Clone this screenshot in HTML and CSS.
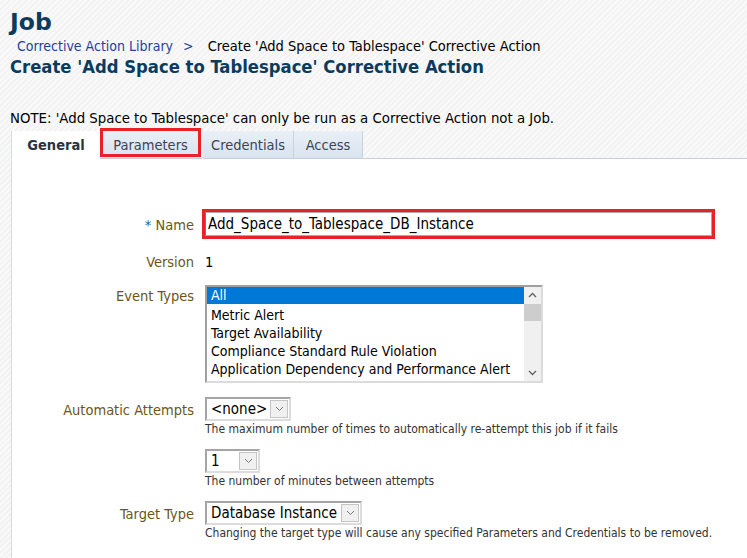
FILE: index.html
```html
<!DOCTYPE html>
<html>
<head>
<meta charset="utf-8">
<link rel="stylesheet" href="styles.css">
</head>
<body>
<div class="page">
  <header class="header">
    <h1 class="title">Job</h1>
    <div class="crumbs"><a class="crumb-link">Corrective Action Library</a><span class="crumb-sep">&gt;</span><span class="crumb-cur">Create 'Add Space to Tablespace' Corrective Action</span></div>
    <h2 class="subtitle">Create 'Add Space to Tablespace' Corrective Action</h2>
    <p class="note">NOTE: 'Add Space to Tablespace' can only be run as a Corrective Action not a Job.</p>
  </header>
  <nav class="tabs">
    <div class="tab tab-active">General</div>
    <div class="tab tab-params">Parameters<span class="hl-mark"></span></div>
    <div class="tab tab-cred">Credentials</div>
    <div class="tab tab-access">Access</div>
    <div class="tab-fill"></div>
  </nav>
  <section class="panel">
    <div class="form">
      <div class="row row-name">
        <div class="label"><span class="req">*</span> Name</div>
        <div class="field">
          <div class="hl-box"><div class="text-input">Add_Space_to_Tablespace_DB_Instance</div></div>
        </div>
      </div>
      <div class="row row-version">
        <div class="label">Version</div>
        <div class="field value">1</div>
      </div>
      <div class="row row-events">
        <div class="label">Event Types</div>
        <div class="field">
          <div class="listbox">
            <div class="options">
              <div class="opt opt-sel">All</div>
              <div class="opt">Metric Alert</div>
              <div class="opt">Target Availability</div>
              <div class="opt">Compliance Standard Rule Violation</div>
              <div class="opt">Application Dependency and Performance Alert</div>
            </div>
            <div class="scrollbar">
              <svg class="sb-arrow" width="17" height="17" viewBox="0 0 17 17"><path d="M5 10 L8.5 6.5 L12 10" fill="none" stroke="#606060" stroke-width="1.3"/></svg>
              <div class="sb-thumb"></div>
              <div class="sb-space"></div>
              <svg class="sb-arrow" width="17" height="17" viewBox="0 0 17 17"><path d="M5 7 L8.5 10.5 L12 7" fill="none" stroke="#606060" stroke-width="1.3"/></svg>
            </div>
          </div>
        </div>
      </div>
      <div class="row row-attempts">
        <div class="label">Automatic Attempts</div>
        <div class="field">
          <div class="select sel-none"><span class="sel-text">&lt;none&gt;</span><span class="sel-btn"><svg width="9" height="6" viewBox="0 0 9 6"><path d="M1 1 L4.5 4.5 L8 1" fill="none" stroke="#777" stroke-width="1"/></svg></span></div>
          <div class="help">The maximum number of times to automatically re-attempt this job if it fails</div>
          <div class="select sel-one"><span class="sel-text">1</span><span class="sel-btn"><svg width="9" height="6" viewBox="0 0 9 6"><path d="M1 1 L4.5 4.5 L8 1" fill="none" stroke="#777" stroke-width="1"/></svg></span></div>
          <div class="help">The number of minutes between attempts</div>
        </div>
      </div>
      <div class="row row-target">
        <div class="label">Target Type</div>
        <div class="field">
          <div class="select sel-target"><span class="sel-text">Database Instance</span><span class="sel-btn"><svg width="9" height="6" viewBox="0 0 9 6"><path d="M1 1 L4.5 4.5 L8 1" fill="none" stroke="#777" stroke-width="1"/></svg></span></div>
          <div class="help help-target">Changing the target type will cause any specified Parameters and Credentials to be removed.</div>
        </div>
      </div>
    </div>
  </section>
</div>
</body>
</html>
```

FILE: styles.css
```css
html, body {
  margin: 0;
  padding: 0;
}
body {
  width: 747px;
  height: 558px;
  overflow: hidden;
  font-family: "DejaVu Sans Condensed", "DejaVu Sans", sans-serif;
  font-size: 14px;
  color: #000;
  background-color: #f6f6f6;
  background-image: repeating-linear-gradient(135deg, #f9f9f9 0px, #f9f9f9 2px, #f3f3f3 2px, #f3f3f3 4px);
}
.page {
  display: flex;
  flex-direction: column;
  height: 558px;
}
.header {
  padding: 8px 0 0 10px;
}
.title {
  margin: 0;
  font-family: "DejaVu Sans", sans-serif;
  font-size: 23.5px;
  font-weight: bold;
  color: #0c3b5d;
  line-height: 28px;
}
.crumbs {
  margin: 1px 0 0 7px;
  line-height: 18px;
  font-size: 14px;
}
.crumb-link {
  color: #1f3f9f;
}
.crumb-sep {
  color: #1f3f9f;
  margin: 0 14px 0 10px;
}
.crumb-cur {
  font-size: 14.5px;
}
.subtitle {
  margin: 0;
  font-family: "DejaVu Sans Condensed", "DejaVu Sans", sans-serif;
  font-size: 18.3px;
  font-weight: bold;
  color: #0c3b5d;
  line-height: 22px;
  padding-top: 1px;
}
.note {
  margin: 31px 0 0 0;
  line-height: 18px;
  font-size: 14.8px;
}
.tabs {
  display: flex;
  align-items: stretch;
  height: 28px;
  margin-top: 4px;
  padding-left: 11px;
}
.tab {
  position: relative;
  display: flex;
  align-items: center;
  justify-content: center;
  box-sizing: border-box;
  font-size: 14.5px;
  color: #3c4452;
  background: linear-gradient(#e9eff6, #d9e4ef);
  border-right: 1px solid #c7d2de;
  border-bottom: 1px solid #c5d0dc;
}
.tab-active {
  width: 89px;
  background: #fff;
  font-weight: bold;
  color: #2b3340;
  border-left: 1px solid #d6dbe1;
  border-bottom: 1px solid #fff;
  border-right: none;
}
.tab-params {
  width: 103px;
  border-right: 2px solid #f4f4f4;
}
.tab-cred {
  width: 91px;
}
.tab-access {
  width: 69px;
}
.hl-mark {
  position: absolute;
  left: 0;
  top: -3px;
  width: 101px;
  height: 29px;
  box-sizing: border-box;
  border: 3px solid #e8212b;
}
.tab-fill {
  flex: 1;
  border-bottom: 1px solid #c5d0dc;
}
.panel {
  flex: 1;
  margin-left: 11px;
  background: #fff;
  border-left: 1px solid #d6dbe1;
}
.form {
  padding-top: 50px;
}
.row {
  display: grid;
  grid-template-columns: 182px 1fr;
  column-gap: 11px;
}
.label {
  text-align: right;
  color: #6b5618;
  line-height: 20px;
  font-size: 14.5px;
}
.req {
  color: #2a5fa0;
}
.row-name .label {
  padding-top: 6px;
}
.hl-box {
  width: 507px;
  height: 24px;
  border: 3px solid #e8212b;
  margin-left: -3px;
}
.text-input {
  height: 22px;
  border: 1px solid #a9a9a9;
  border-left-color: #777;
  padding-left: 2px;
  line-height: 22px;
  font-size: 15px;
  box-sizing: content-box;
}
.row-version {
  margin-top: 13px;
}
.value {
  line-height: 20px;
  font-size: 14.5px;
}
.row-events {
  margin-top: 13px;
}
.row-events .label {
  line-height: 18px;
  padding-top: 2px;
}
.listbox {
  display: flex;
  width: 334px;
  height: 94px;
  border: 2px solid #a0a0a0;
  border-right-color: #dcdcdc;
  border-bottom-color: #dcdcdc;
  background: #fff;
}
.options {
  flex: 1;
  overflow: hidden;
}
.opt {
  height: 18px;
  line-height: 18px;
  padding-left: 4px;
  white-space: nowrap;
}
.opt-sel {
  background: #0078d7;
  color: #fff;
  height: 17px;
  line-height: 17px;
  margin-bottom: 2px;
}
.scrollbar {
  display: flex;
  flex-direction: column;
  width: 17px;
  background: #f0f0f0;
}
.sb-arrow {
  display: block;
}
.sb-thumb {
  height: 17px;
  background: #cdcdcd;
}
.sb-space {
  flex: 1;
}
.row-attempts {
  margin-top: 14px;
}
.row-attempts .label {
  padding-top: 3px;
}
.select {
  display: inline-flex;
  align-items: stretch;
  height: 20px;
  border: 2px solid #a5a5a5;
  border-right-color: #dcdcdc;
  border-bottom-color: #dcdcdc;
  background: #fff;
  font-size: 15px;
}
.sel-text {
  padding: 0 5px 0 4px;
  line-height: 20px;
}
.sel-none .sel-text {
  padding-right: 3px;
}
.sel-btn {
  display: flex;
  align-items: center;
  justify-content: center;
  width: 16px;
  margin: 1px 1px 1px 0;
  border: 1px solid #c5c5c5;
  background: #f0f0f0;
}
.sel-one .sel-text {
  width: 28px;
  padding-right: 0;
}
.help {
  font-size: 12px;
  line-height: 16px;
  color: #333;
}
.sel-one {
  margin-top: 12px;
}
.row-target {
  margin-top: 12px;
}
.row-target .label {
  padding-top: 3px;
}
.sel-target .sel-text {
  padding-right: 4px;
}
```
